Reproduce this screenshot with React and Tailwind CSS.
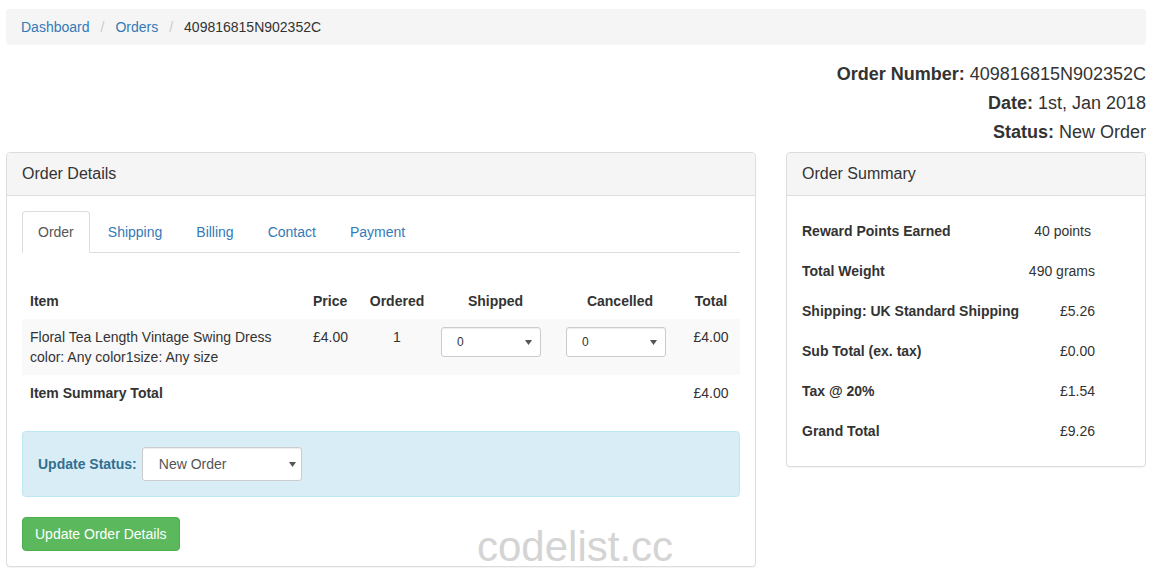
import React from "react";

const Caret = () => (
  <svg className="h-[5px] w-[7px] shrink-0" viewBox="0 0 7 5"><path d="M0 0h7L3.5 5z" fill="#555" /></svg>
);

const FakeSelect = ({ value, className }) => (
  <div className={`flex items-center justify-between rounded-[3px] border border-[#ccc] bg-white shadow-[inset_0_1px_1px_rgba(0,0,0,0.075)] ${className}`}>
    <span>{value}</span>
    <Caret />
  </div>
);

const Panel = ({ title, children, className }) => (
  <section className={`rounded-[4px] border border-[#ddd] bg-white shadow-[0_1px_1px_rgba(0,0,0,0.05)] ${className}`}>
    <div className="flex h-[43px] items-center rounded-t-[4px] border-b border-[#ddd] bg-[#f5f5f5] px-[15px] text-[16px]">{title}</div>
    {children}
  </section>
);

const summary = [
  { label: "Reward Points Earned", value: "40 points", pad: "pr-[4px]" },
  { label: "Total Weight", value: "490 grams", pad: "" },
  { label: "Shipping: UK Standard Shipping", value: "£5.26", pad: "" },
  { label: "Sub Total (ex. tax)", value: "£0.00", pad: "" },
  { label: "Tax @ 20%", value: "£1.54", pad: "" },
  { label: "Grand Total", value: "£9.26", pad: "" },
];

const tabs = ["Order", "Shipping", "Billing", "Contact", "Payment"];

export default function App() {
  return (
    <div className="relative min-h-[580px] bg-white font-['Liberation_Sans',Arial,sans-serif] text-[14px] leading-[20px] text-[#333]">
      <div className="w-[1140px] pl-[6px] pt-[9px] box-content">
        <nav className="flex h-[36px] items-center rounded-[4px] bg-[#f5f5f5] px-[15px]">
          <a className="text-[#337ab7]">Dashboard</a>
          <span className="px-[11px] text-[#ccc]">/</span>
          <a className="text-[#337ab7]">Orders</a>
          <span className="px-[11px] text-[#ccc]">/</span>
          <span>409816815N902352C</span>
        </nav>

        <div className="mt-[15px] text-right text-[18px] leading-[29px]">
          <p><b>Order Number:</b> 409816815N902352C</p>
          <p><b>Date:</b> 1st, Jan 2018</p>
          <p><b>Status:</b> New Order</p>
        </div>

        <div className="mt-[5px] flex items-start gap-[30px]">
          <Panel title="Order Details" className="w-[750px]">
            <div className="p-[15px]">
              <ul className="flex border-b border-[#ddd]">
                {tabs.map((tab, i) => (
                  <li
                    key={tab}
                    className={`-mb-px mr-[2px] rounded-t-[4px] border px-[15px] py-[10px] ${
                      i === 0 ? "border-[#ddd] border-b-white bg-white text-[#555]" : "border-transparent text-[#337ab7]"
                    }`}
                  >
                    {tab}
                  </li>
                ))}
              </ul>

              <table className="mt-[30px] w-full table-fixed border-collapse">
                <colgroup>
                  <col className="w-[283px]" />
                  <col className="w-[56px]" />
                  <col className="w-[72px]" />
                  <col className="w-[125px]" />
                  <col className="w-[124px]" />
                  <col className="w-[58px]" />
                </colgroup>
                <thead>
                  <tr className="font-bold">
                    <th className="p-[8px] text-left">Item</th>
                    <th className="p-[8px] text-left">Price</th>
                    <th className="p-[8px] text-center">Ordered</th>
                    <th className="p-[8px] text-center">Shipped</th>
                    <th className="p-[8px] text-center">Cancelled</th>
                    <th className="p-[8px] text-center">Total</th>
                  </tr>
                </thead>
                <tbody>
                  <tr className="bg-[#f9f9f9] align-top">
                    <td className="p-[8px]">
                      Floral Tea Length Vintage Swing Dress
                      <br />
                      color: Any color1size: Any size
                    </td>
                    <td className="p-[8px]">£4.00</td>
                    <td className="p-[8px] text-center">1</td>
                    <td className="p-[8px]">
                      <FakeSelect value="0" className="h-[30px] w-[100px] pl-[15px] pr-[8px] text-[12px]" />
                    </td>
                    <td className="p-[8px]">
                      <FakeSelect value="0" className="h-[30px] w-[100px] pl-[15px] pr-[8px] text-[12px]" />
                    </td>
                    <td className="p-[8px] text-center">£4.00</td>
                  </tr>
                  <tr>
                    <td className="p-[8px] font-bold">Item Summary Total</td>
                    <td className="p-[8px]" />
                    <td className="p-[8px]" />
                    <td className="p-[8px]" />
                    <td className="p-[8px]" />
                    <td className="p-[8px] text-center">£4.00</td>
                  </tr>
                </tbody>
              </table>

              <div className="mt-[20px] flex items-center gap-[5px] rounded-[4px] border border-[#bce8f1] bg-[#d9edf7] p-[15px]">
                <label className="font-bold text-[#31708f]">Update Status:</label>
                <FakeSelect value="New Order" className="h-[34px] w-[160px] pl-[16px] pr-[5px] text-[#555]" />
              </div>

              <button
                type="button"
                className="mt-[20px] h-[34px] rounded-[4px] border border-[#4cae4c] bg-[#5cb85c] px-[12px] text-white"
              >
                Update Order Details
              </button>
            </div>
          </Panel>

          <Panel title="Order Summary" className="w-[360px]">
            <div className="py-[15px] pl-[15px] pr-[50px]">
              {summary.map((row) => (
                <div key={row.label} className="flex h-[40px] items-center justify-between">
                  <span className="font-bold">{row.label}</span>
                  <span className={row.pad}>{row.value}</span>
                </div>
              ))}
            </div>
          </Panel>
        </div>
      </div>

      <div className="pointer-events-none absolute left-[477px] top-[522px] text-[42px] leading-[50px] text-[#d4d4d4]">
        codelist.cc
      </div>
    </div>
  );
}
